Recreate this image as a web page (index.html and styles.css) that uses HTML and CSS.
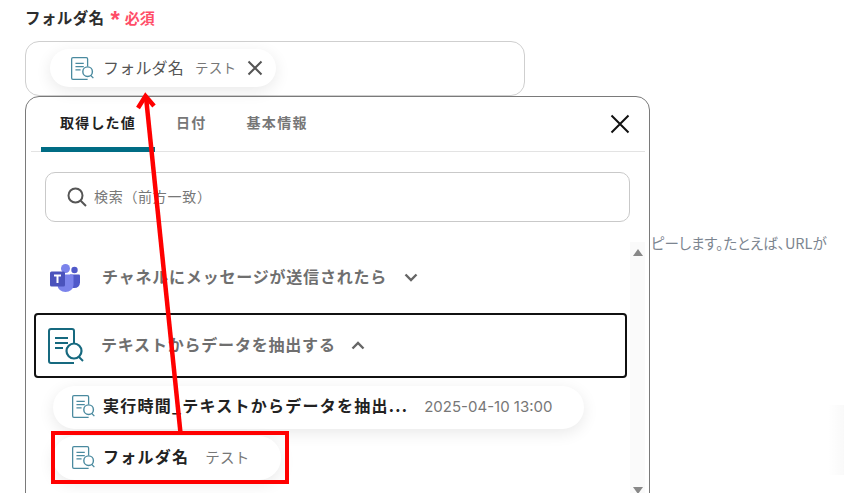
FILE: index.html
```html
<!DOCTYPE html>
<html lang="ja">
<head>
    <meta charset="UTF-8">
    <meta name="viewport" content="width=device-width, initial-scale=1.0">
    <title>フォルダ名</title>
    <link rel="stylesheet" href="styles.css">
</head>
<body>
    <svg class="defs" width="0" height="0">
        <symbol id="doc" viewBox="0 0 36 36">
            <path d="M26 15V3a2 2 0 0 0-2-2H3a2 2 0 0 0-2 2v30a2 2 0 0 0 2 2h23" fill="none" stroke="currentColor" stroke-width="2"/>
            <path d="M7 10h13M7 15h13M7 20h8" fill="none" stroke="currentColor" stroke-width="2"/>
            <circle cx="26" cy="23" r="7.500" fill="#fff" stroke="currentColor" stroke-width="2.200"/>
            <path d="M31 29l4 4" fill="none" stroke="currentColor" stroke-width="2"/>
        </symbol>
    </svg>

    <div class="page">
        <div class="field-label">
            <span class="field-name">フォルダ名</span>
            <span class="required"><span class="star">*</span>必須</span>
        </div>
        <div class="field">
            <div class="chip chip-top">
                <svg class="doc-icon soft"><use href="#doc"/></svg>
                <span class="chip-name">フォルダ名</span>
                <span class="chip-value">テスト</span>
                <svg class="chip-close" viewBox="0 0 16 16"><path d="M1.500 1.500l13 13M14.500 1.500l-13 13"/></svg>
            </div>
        </div>

        <div class="lower">
            <div class="panel">
                <div class="tabs">
                    <div class="tab active">取得した値</div>
                    <div class="tab">日付</div>
                    <div class="tab">基本情報</div>
                    <svg class="panel-close" viewBox="0 0 20 20"><path d="M1.500 1.500l17 17M18.500 1.500l-17 17"/></svg>
                </div>
                <div class="search">
                    <svg class="search-icon" viewBox="0 0 20 20"><circle cx="8.500" cy="8.500" r="7"/><path d="M13.700 13.700l5.300 5.300"/></svg>
                    <span>検索（前方一致）</span>
                </div>
                <div class="list-area">
                    <div class="list">
                        <div class="group">
                            <svg class="teams-icon" viewBox="0 0 30 28">
                                <circle cx="24.500" cy="6" r="3.200" fill="#5059c9"/>
                                <path d="M20 10.500h9a1 1 0 0 1 1 1v7a5.500 5.500 0 0 1-5.500 5.500H20z" fill="#5059c9"/>
                                <circle cx="15.500" cy="4.500" r="4.500" fill="#7b83eb"/>
                                <path d="M9 10.500h13a1.500 1.500 0 0 1 1.500 1.500v9a8 7 0 0 1-16 0v-9z" fill="#7b83eb"/>
                                <rect x="0" y="7.500" width="15" height="15" rx="1.500" fill="#4b53bc"/>
                                <path d="M4 11.500h7M7.500 11.500v7.500" stroke="#fff" stroke-width="2" fill="none"/>
                            </svg>
                            <span class="group-name">チャネルにメッセージが送信されたら</span>
                            <svg class="chevron" viewBox="0 0 14 9"><path d="M1.500 1.500L7 7l5.500-5.500"/></svg>
                        </div>
                        <div class="group group-open">
                            <svg class="doc-icon big"><use href="#doc"/></svg>
                            <span class="group-name">テキストからデータを抽出する</span>
                            <svg class="chevron" viewBox="0 0 14 9"><path d="M1.500 7.500L7 2l5.500 5.500"/></svg>
                        </div>
                        <div class="chip chip-item">
                            <svg class="doc-icon soft"><use href="#doc"/></svg>
                            <span class="item-name">実行時間_テキストからデータを抽出...</span>
                            <span class="item-date">2025-04-10 13:00</span>
                        </div>
                        <div class="chip chip-item chip-short">
                            <svg class="doc-icon soft"><use href="#doc"/></svg>
                            <span class="item-name">フォルダ名</span>
                            <span class="chip-value">テスト</span>
                        </div>
                    </div>
                    <div class="scrollbar">
                        <span class="arrow-up"></span>
                        <span class="arrow-down"></span>
                    </div>
                </div>
            </div>
            <p class="side-note">ピーします。たとえば、URLが</p>
        </div>
    </div>

    <!-- annotation drawn on top of the screenshot -->
    <div class="mark-box"></div>
    <svg class="mark-arrow" viewBox="0 0 844 493" width="844" height="493">
        <path d="M180.500 433L146 97" stroke="#f00" stroke-width="4.500" fill="none"/>
        <path d="M138 108L145.500 96L154 106" stroke="#f00" stroke-width="4.500" fill="none"/>
    </svg>
    <div class="edge-shadow"></div>
</body>
</html>
```

FILE: styles.css
```css
* {
    box-sizing: border-box;
}
html, body {
    margin: 0;
    height: 493px;
    overflow: hidden;
    background: #fff;
}
body {
    font-family: "Noto Sans CJK JP", "Noto Sans", sans-serif;
    color: #2b2b2b;
}
.defs {
    position: absolute;
}
.page {
    height: 493px;
    overflow: hidden;
    padding: 7px 0 0 25px;
}
.field-label {
    display: flex;
    align-items: center;
    height: 24px;
    margin-bottom: 10px;
    padding-bottom: 4px;
}
.field-name {
    font-size: 15.500px;
    font-weight: 700;
    letter-spacing: 0.4px;
    color: #2d2d2d;
}
.required {
    display: flex;
    align-items: center;
    margin-left: 6px;
    font-size: 15px;
    font-weight: 700;
    color: #ff4d67;
}
.star {
    font-size: 24px;
    line-height: 22px;
    height: 16px;
    margin-right: 5px;
    font-family: "Liberation Sans", sans-serif;
}
.field {
    display: flex;
    align-items: center;
    width: 500px;
    height: 55px;
    padding: 0 0 1px 24px;
    border: 1px solid #cfcfcf;
    border-radius: 14px;
}
.chip {
    display: flex;
    align-items: center;
    background: #fff;
    border-radius: 22px;
    box-shadow: 0 4px 16px rgba(0, 0, 0, 0.09);
}
.chip-top {
    width: 226px;
    height: 38px;
    padding-left: 21px;
}
.doc-icon {
    flex: none;
    color: #16697f;
}
.doc-icon.soft {
    width: 23px;
    height: 23px;
    color: #4a8a9f;
}
.doc-icon.big {
    width: 36px;
    height: 36px;
    margin: 0 17px 0 12px;
}
.chip-name {
    margin: 0 0 3px 9px;
    font-size: 16px;
    letter-spacing: 0.2px;
    color: #555;
}
.chip-value {
    margin: 0 0 2px 11px;
    font-size: 13.500px;
    letter-spacing: 0.2px;
    color: #777;
}
.chip-close {
    width: 16px;
    height: 16px;
    margin-left: 11px;
    fill: none;
    stroke: #555;
    stroke-width: 2;
}
.lower {
    display: flex;
    align-items: flex-start;
}
.panel {
    width: 625px;
    height: 460px;
    flex: none;
    padding: 0 4px 0 5px;
    border: 1px solid #7a7a7a;
    border-radius: 14px;
}
.tabs {
    display: flex;
    align-items: center;
    height: 55px;
    border-bottom: 1px solid #e3e3e3;
    padding-left: 10px;
}
.tab {
    width: 114px;
    height: 55px;
    line-height: 51px;
    text-align: center;
    font-size: 14px;
    font-weight: 700;
    letter-spacing: 1.200px;
    color: #777;
}
.tab.active {
    color: #222;
    border-bottom: 5px solid #006c84;
    border-radius: 5px 5px 0 0;
    margin-bottom: -1px;
}
.tab + .tab {
    width: auto;
    margin-left: 21px;
}
.tab + .tab + .tab {
    margin-left: 40px;
    letter-spacing: 1.400px;
}
.panel-close {
    width: 20px;
    height: 20px;
    margin-left: auto;
    margin-right: 15px;
    fill: none;
    stroke: #111;
    stroke-width: 2;
}
.search {
    display: flex;
    align-items: center;
    height: 50px;
    margin: 20px 15px 0 14px;
    padding-left: 21px;
    border: 1px solid #c9c9c9;
    border-radius: 10px;
    font-size: 14px;
    letter-spacing: 0.7px;
    color: #777;
}
.search span {
    margin-bottom: 3px;
}
.search-icon {
    width: 20px;
    height: 20px;
    margin-right: 7px;
    fill: none;
    stroke: #555;
    stroke-width: 2;
}
.list-area {
    display: flex;
    margin-top: 20px;
}
.list {
    flex: 1;
    padding-left: 3px;
    min-width: 0;
}
.group {
    display: flex;
    align-items: center;
}
.group:first-child {
    height: 71px;
    padding-left: 16px;
}
.teams-icon {
    width: 30px;
    height: 28px;
    margin-right: 22px;
}
.group-name {
    margin-bottom: 3px;
    font-size: 16px;
    font-weight: 700;
    letter-spacing: 0.8px;
    color: #6f6f6f;
}
.chevron {
    width: 14px;
    height: 9px;
    margin-left: 17px;
    fill: none;
    stroke: #666;
    stroke-width: 2.400;
}
.group-open {
    width: 593px;
    height: 65px;
    border: 2px solid #111;
    border-radius: 4px;
}
.group-open .chevron {
    margin-left: 15px;
}
.chip-item {
    width: 531px;
    height: 43px;
    margin: 8px 0 0 19px;
    padding: 0 0 2px 19px;
}
.chip-short {
    width: 228px;
    height: 44px;
    margin-top: 7px;
}
.item-name {
    margin: 0 0 3px 8px;
    font-size: 16px;
    font-weight: 700;
    letter-spacing: 1.250px;
    color: #222;
}
.item-date {
    margin-left: 16px;
    font-family: Inter, Roboto, sans-serif;
    font-size: 15px;
    color: #777;
}
.chip-short .chip-value {
    margin-left: 16px;
    font-size: 14.500px;
}
.scrollbar {
    flex: none;
    display: flex;
    flex-direction: column;
    align-items: center;
    justify-content: space-between;
    width: 15px;
    height: 259px;
    padding: 7px 0;
    background: #fafafa;
}
.arrow-up {
    border: 5px solid transparent;
    border-top: 0;
    border-bottom: 7px solid #888;
}
.arrow-down {
    border: 5px solid transparent;
    border-bottom: 0;
    border-top: 7px solid #888;
}
.side-note {
    margin: 136px 0 0 1px;
    font-size: 14.500px;
    font-feature-settings: "palt";
    white-space: nowrap;
    color: #7c8590;
}
.mark-box {
    position: absolute;
    left: 51px;
    top: 431px;
    width: 238px;
    height: 53px;
    border: 4.500px solid #f00;
}
.mark-arrow {
    position: absolute;
    left: 0;
    top: 0;
    pointer-events: none;
}
.edge-shadow {
    position: absolute;
    right: 0;
    top: 405px;
    width: 16px;
    height: 70px;
    background: linear-gradient(to right, rgba(0, 0, 0, 0), rgba(0, 0, 0, 0.025));
}
```
